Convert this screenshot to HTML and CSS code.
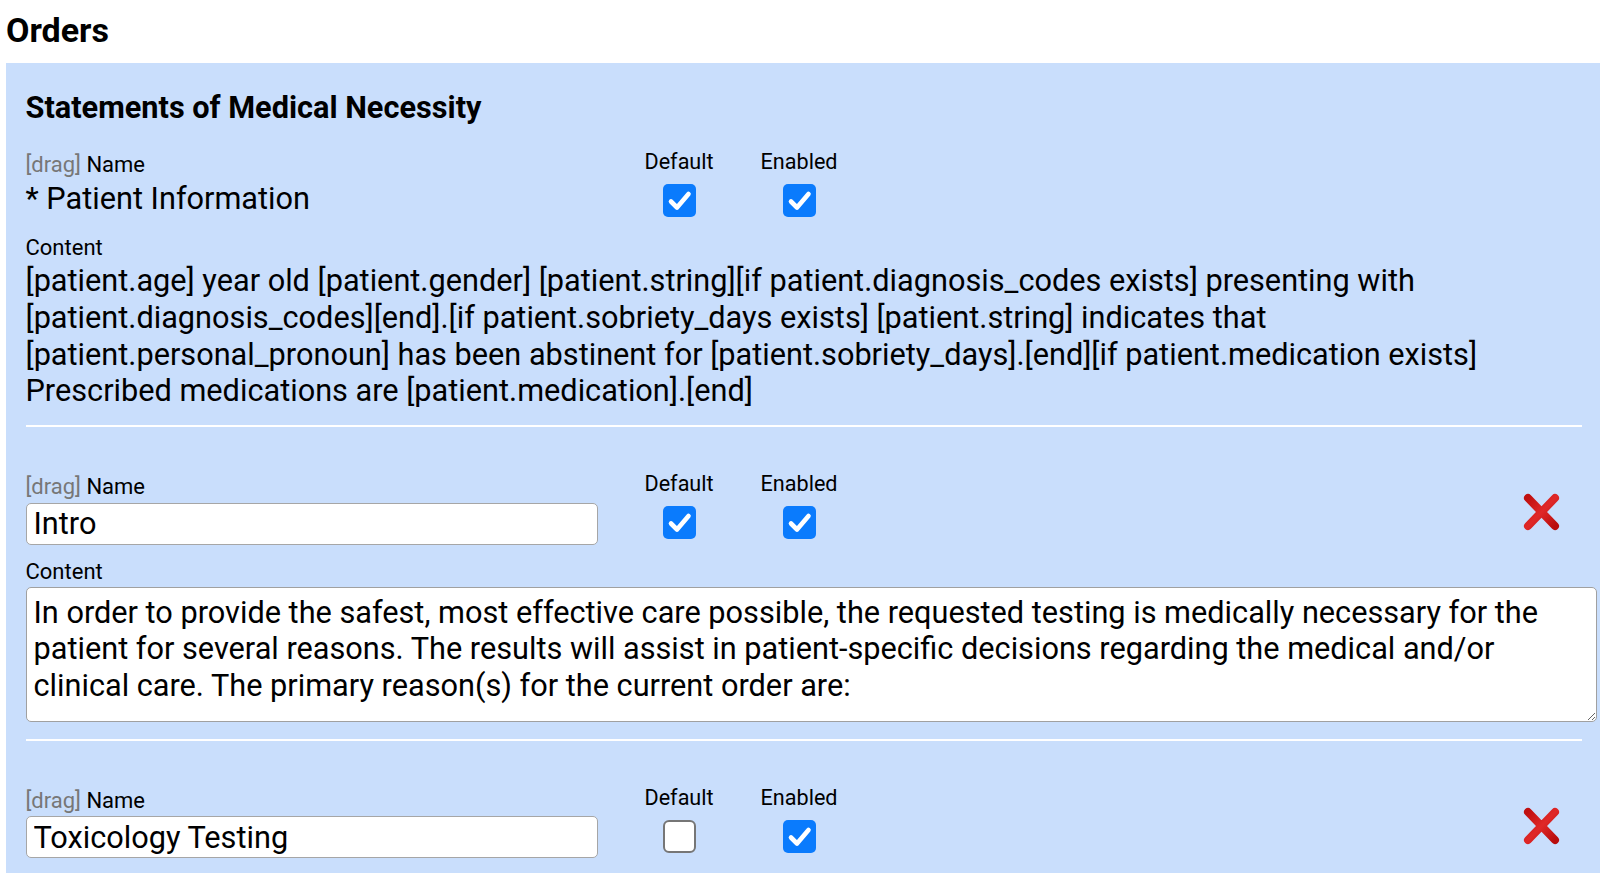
FILE: index.html
```html
<!DOCTYPE html>
<html lang="en">
<head>
<meta charset="utf-8">
<title>Orders</title>
<link rel="stylesheet" href="styles.css">
</head>
<body>
<h1 class="page-title">Orders</h1>
<section class="panel">
  <h2 class="panel-title">Statements of Medical Necessity</h2>

  <div class="item">
    <div class="row">
      <div class="name-col">
        <div class="label"><span class="drag">[drag]</span> Name</div>
        <div class="value">* Patient Information</div>
      </div>
      <div class="check-col">
        <div class="label">Default</div>
        <span class="cb checked"><svg width="33" height="33" viewBox="0 0 33 33"><rect x="0" y="0" width="33" height="33" rx="5" fill="#0a7bfd"/><path d="M8 17.5 L14 23.5 L25.5 10" fill="none" stroke="#fff" stroke-width="4.6" stroke-linecap="round" stroke-linejoin="round"/></svg></span>
      </div>
      <div class="check-col">
        <div class="label">Enabled</div>
        <span class="cb checked"><svg width="33" height="33" viewBox="0 0 33 33"><rect x="0" y="0" width="33" height="33" rx="5" fill="#0a7bfd"/><path d="M8 17.5 L14 23.5 L25.5 10" fill="none" stroke="#fff" stroke-width="4.6" stroke-linecap="round" stroke-linejoin="round"/></svg></span>
      </div>
    </div>
    <div class="label content-label">Content</div>
    <div class="content-text">[patient.age] year old [patient.gender] [patient.string][if patient.diagnosis_codes exists] presenting with [patient.diagnosis_codes][end].[if patient.sobriety_days exists] [patient.string] indicates that [patient.personal_pronoun] has been abstinent for [patient.sobriety_days].[end][if patient.medication exists] Prescribed medications are [patient.medication].[end]</div>
  </div>
  <hr class="sep">

  <div class="item">
    <div class="row">
      <div class="name-col">
        <div class="label"><span class="drag">[drag]</span> Name</div>
        <input class="name-input" type="text" value="Intro">
      </div>
      <div class="check-col">
        <div class="label">Default</div>
        <span class="cb checked"><svg width="33" height="33" viewBox="0 0 33 33"><rect x="0" y="0" width="33" height="33" rx="5" fill="#0a7bfd"/><path d="M8 17.5 L14 23.5 L25.5 10" fill="none" stroke="#fff" stroke-width="4.6" stroke-linecap="round" stroke-linejoin="round"/></svg></span>
      </div>
      <div class="check-col">
        <div class="label">Enabled</div>
        <span class="cb checked"><svg width="33" height="33" viewBox="0 0 33 33"><rect x="0" y="0" width="33" height="33" rx="5" fill="#0a7bfd"/><path d="M8 17.5 L14 23.5 L25.5 10" fill="none" stroke="#fff" stroke-width="4.6" stroke-linecap="round" stroke-linejoin="round"/></svg></span>
      </div>
      <span class="remove"><svg width="37" height="38" viewBox="0 0 37 38"><defs><linearGradient id="rg1" x1="0" y1="0" x2="1" y2="1"><stop offset="0" stop-color="#c01010"/><stop offset="0.5" stop-color="#e02828"/><stop offset="1" stop-color="#b80c0c"/></linearGradient></defs><path d="M5 5 L32 33 M32 5 L5 33" stroke="url(#rg1)" stroke-width="8" stroke-linecap="round"/></svg></span>
    </div>
    <div class="label content-label">Content</div>
    <textarea class="content-area">In order to provide the safest, most effective care possible, the requested testing is medically necessary for the patient for several reasons. The results will assist in patient-specific decisions regarding the medical and/or clinical care. The primary reason(s) for the current order are:</textarea>
  </div>
  <hr class="sep">

  <div class="item">
    <div class="row">
      <div class="name-col">
        <div class="label"><span class="drag">[drag]</span> Name</div>
        <input class="name-input" type="text" value="Toxicology Testing">
      </div>
      <div class="check-col">
        <div class="label">Default</div>
        <span class="cb"><svg width="33" height="33" viewBox="0 0 33 33"><rect x="1" y="1" width="31" height="31" rx="5" fill="#fff" stroke="#767676" stroke-width="2"/></svg></span>
      </div>
      <div class="check-col">
        <div class="label">Enabled</div>
        <span class="cb checked"><svg width="33" height="33" viewBox="0 0 33 33"><rect x="0" y="0" width="33" height="33" rx="5" fill="#0a7bfd"/><path d="M8 17.5 L14 23.5 L25.5 10" fill="none" stroke="#fff" stroke-width="4.6" stroke-linecap="round" stroke-linejoin="round"/></svg></span>
      </div>
      <span class="remove"><svg width="37" height="38" viewBox="0 0 37 38"><defs><linearGradient id="rg2" x1="0" y1="0" x2="1" y2="1"><stop offset="0" stop-color="#c01010"/><stop offset="0.5" stop-color="#e02828"/><stop offset="1" stop-color="#b80c0c"/></linearGradient></defs><path d="M5 5 L32 33 M32 5 L5 33" stroke="url(#rg2)" stroke-width="8" stroke-linecap="round"/></svg></span>
    </div>
  </div>
</section>
</body>
</html>
```

FILE: styles.css
```css
html, body {
  margin: 0;
  padding: 0;
  background: #fff;
  overflow: hidden;
}

body {
  font-family: Roboto, "Liberation Sans", sans-serif;
  color: #000;
}

.page-title {
  margin: 10px 0 13px 6px;
  font-size: 34px;
  line-height: 40px;
  font-weight: 700;
}

.panel {
  margin-left: 6px;
  background: #c9defc;
  padding: 28px 18px 40px 19.5px;
  min-height: 800px;
}

.panel-title {
  margin: 0 0 25px 0;
  font-size: 30.7px;
  line-height: 33px;
  font-weight: 700;
}

.label {
  font-size: 22px;
  line-height: 25px;
}

.check-col .label {
  font-size: 21.6px;
}

.drag {
  color: #777;
}

.row {
  display: flex;
  align-items: flex-start;
}

.name-col {
  width: 572px;
  padding-top: 3px;
  display: flex;
  flex-direction: column;
}

.name-col .label {
  margin-bottom: 3.5px;
}

.value {
  font-size: 30.7px;
  line-height: 36.7px;
  margin-bottom: 4px;
}

.check-col {
  margin-left: 47px;
  display: flex;
  flex-direction: column;
  align-items: center;
}

.cb {
  display: block;
  width: 33px;
  height: 33px;
  margin-top: 10px;
}

.cb svg {
  display: block;
}

.remove {
  margin-left: auto;
  margin-right: 22px;
  margin-top: 22px;
  width: 37px;
  height: 38px;
}

.remove svg {
  display: block;
}

.content-label {
  margin-top: 14px;
  margin-bottom: 3px;
}

.content-text {
  font-size: 30.7px;
  line-height: 36.7px;
}

.item {
  padding-bottom: 15px;
}

.sep {
  margin: 0 0 44px 0;
  border: 0;
  height: 2px;
  background: #fff;
}

.name-input {
  box-sizing: border-box;
  width: 572px;
  height: 42px;
  margin: 0;
  padding: 0 7px;
  border: 1px solid #a6a6a6;
  border-radius: 5px;
  background: #fff;
  font-family: Roboto, "Liberation Sans", sans-serif;
  font-size: 30.7px;
  color: #000;
  outline: none;
}

.content-area {
  display: block;
  box-sizing: border-box;
  width: calc(100% + 15px);
  height: 135px;
  margin: 0 0 2px 0;
  padding: 7px 7px 4px 7px;
  border: 1px solid #a0a0a0;
  border-radius: 5px;
  background: #fff;
  font-family: Roboto, "Liberation Sans", sans-serif;
  font-size: 30.7px;
  line-height: 36.7px;
  color: #000;
  outline: none;
}
```
